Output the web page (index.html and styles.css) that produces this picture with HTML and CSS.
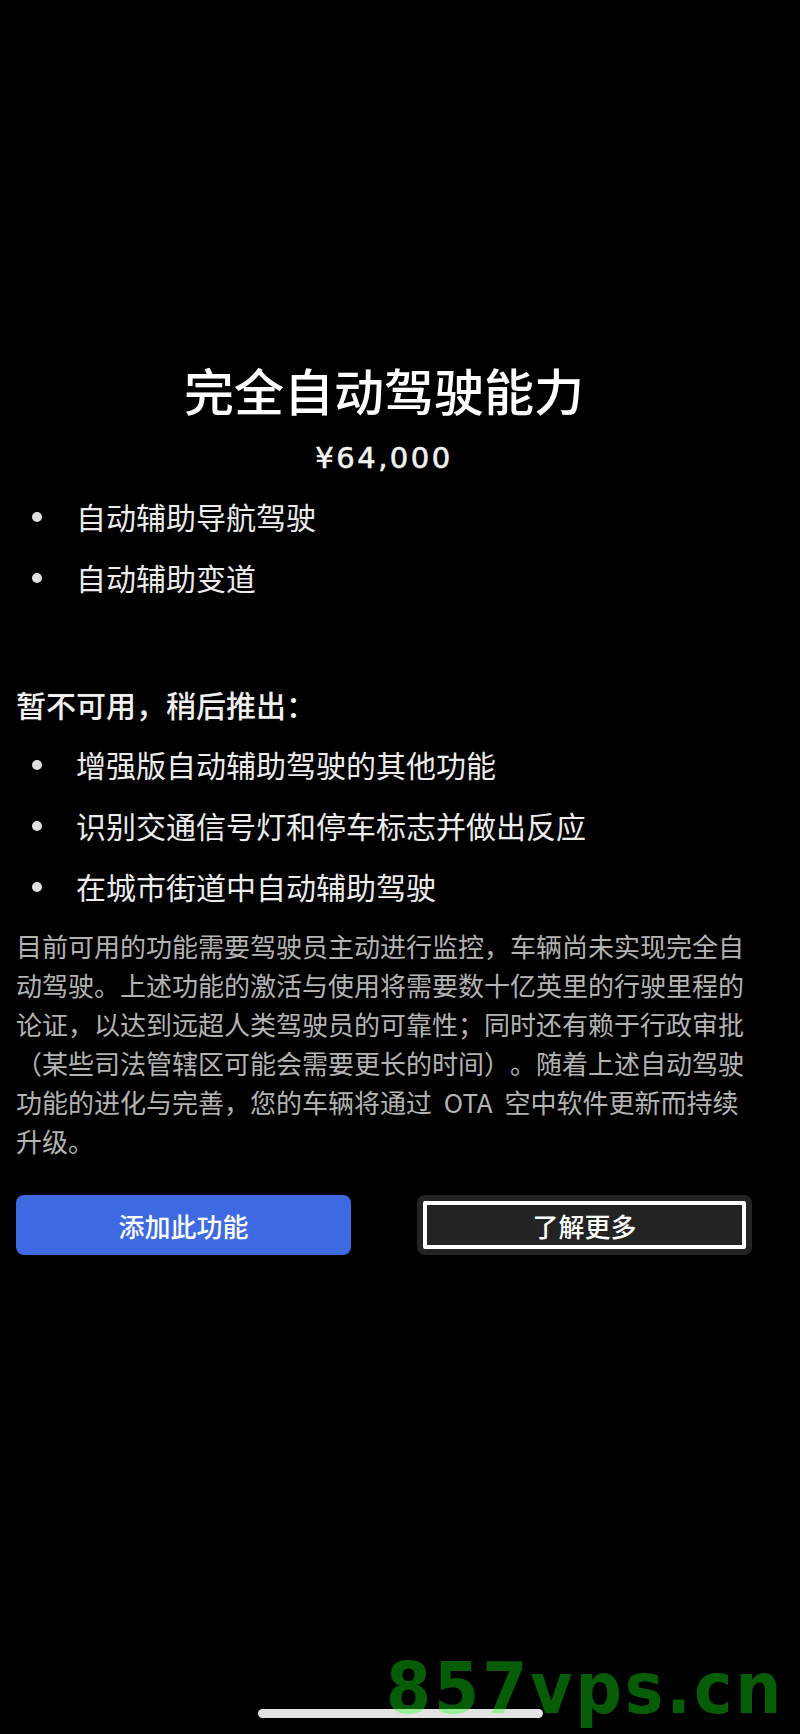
FILE: index.html
```html
<!DOCTYPE html>
<html lang="zh-CN">
<head>
<meta charset="utf-8">
<title>完全自动驾驶能力</title>
<link rel="stylesheet" href="styles.css">
</head>
<body>
<main class="page">
  <h1 class="title">完全自动驾驶能力</h1>
  <p class="price">¥64,000</p>
  <ul class="features">
    <li>自动辅助导航驾驶</li>
    <li>自动辅助变道</li>
  </ul>
  <h2 class="subhead">暂不可用，稍后推出：</h2>
  <ul class="features features-later">
    <li>增强版自动辅助驾驶的其他功能</li>
    <li>识别交通信号灯和停车标志并做出反应</li>
    <li>在城市街道中自动辅助驾驶</li>
  </ul>
  <p class="note">目前可用的功能需要驾驶员主动进行监控，车辆尚未实现完全自动驾驶。上述功能的激活与使用将需要数十亿英里的行驶里程的论证，以达到远超人类驾驶员的可靠性；同时还有赖于行政审批（某些司法管辖区可能会需要更长的时间）。随着上述自动驾驶功能的进化与完善，您的车辆将通过 OTA 空中软件更新而持续升级。</p>
  <div class="actions">
    <button class="btn btn-primary" type="button">添加此功能</button>
    <button class="btn btn-secondary" type="button">了解更多</button>
  </div>
</main>
<div class="home-indicator"></div>
<div class="watermark">857vps.cn</div>
</body>
</html>
```
FILE: styles.css
```css
html, body {
  margin: 0;
  padding: 0;
  background: #000;
}
body {
  position: relative;
  width: 800px;
  height: 1734px;
  overflow: hidden;
  color: #fff;
  font-family: "Noto Sans CJK SC", "Noto Sans", sans-serif;
  text-spacing-trim: space-all;
}
.page {
  box-sizing: border-box;
  width: 800px;
  padding: 359px 48px 0 16px;
}
.title {
  margin: 0;
  font-size: 50px;
  line-height: 60px;
  font-weight: 500;
  text-align: center;
  color: #fff;
}
.price {
  margin: 21px 0 0;
  font-family: "DejaVu Sans", sans-serif;
  font-size: 29px;
  font-weight: 400;
  line-height: 36px;
  letter-spacing: 2.5px;
  -webkit-text-stroke: 0.6px currentColor;
  text-align: center;
  color: #f2f2f2;
}
.features {
  list-style: none;
  margin: 10px 0 0;
  padding: 0;
}
.features li {
  display: flex;
  align-items: center;
  gap: 34px;
  height: 61px;
  font-size: 30px;
  line-height: 61px;
  color: #ececec;
}
.features li::before {
  content: "";
  flex: none;
  width: 10px;
  height: 10px;
  margin-left: 16px;
  border-radius: 50%;
  background: #e0e0e0;
}
.subhead {
  margin: 74px 0 0;
  font-size: 30px;
  line-height: 44px;
  font-weight: 500;
  color: #f0f0f0;
}
.features-later {
  margin-top: 8px;
}
.note {
  margin: 9px 0 0;
  font-size: 26px;
  line-height: 39px;
  word-spacing: 6px;
  color: #b3b3b3;
}
.actions {
  margin-top: 35px;
  display: grid;
  grid-template-columns: 1fr 1fr;
  gap: 66px;
}
.btn {
  height: 60px;
  border: 0;
  border-radius: 8px;
  font-family: "Noto Sans CJK SC", sans-serif;
  font-size: 26px;
  font-weight: 500;
  color: #fff;
  padding: 0;
}
.btn-primary {
  background: #3e6ae1;
}
.btn-secondary {
  background: #232323;
  outline: 4px solid #fff;
  outline-offset: -10px;
}
.home-indicator {
  position: absolute;
  left: 258px;
  top: 1709px;
  width: 285px;
  height: 9px;
  border-radius: 5px;
  background: #e3e3e3;
}
.watermark {
  position: absolute;
  left: 386px;
  top: 1652px;
  font-family: "DejaVu Sans Condensed", "DejaVu Sans", sans-serif;
  font-stretch: condensed;
  font-weight: 700;
  font-size: 72px;
  line-height: 72px;
  letter-spacing: 3px;
  color: rgba(20, 255, 20, 0.36);
  white-space: nowrap;
}
```
